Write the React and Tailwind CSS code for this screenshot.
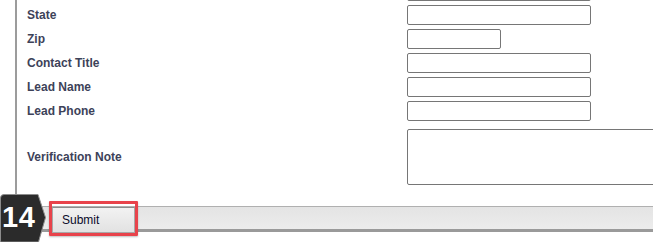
import React from 'react';

// first row is scrolled off the top; only its input's bottom edge shows
const fields = [
  { label: '', size: 'wide' },
  { label: 'State', size: 'wide' },
  { label: 'Zip', size: 'short' },
  { label: 'Contact Title', size: 'wide' },
  { label: 'Lead Name', size: 'wide' },
  { label: 'Lead Phone', size: 'wide' },
];

const StepBadge = ({ step }) => (
  <div className="absolute left-0 top-[194px] w-[47px] h-[48px]">
    <svg width="47" height="48" viewBox="0 0 47 48" className="absolute inset-0">
      <path d="M0.5 4 Q0.5 0.5 4 0.5 L38 0.5 L45.5 23.5 L38.5 48 L0.5 48 Z" fill="#2b2b2b" stroke="#8c8c8c" strokeWidth="1" />
    </svg>
    <span className="absolute left-[2px] top-[7px] text-[29px] leading-[32px] font-bold text-white tracking-[0.5px]">
      {step}
    </span>
  </div>
);

export default function App() {
  return (
    <div className="relative w-[653px] h-[242px] overflow-hidden bg-white font-['Liberation_Sans',Arial,sans-serif]">
      {/* form body */}
      <div className="ml-[15px] mt-[-21px] pb-[15px] border-l-2 border-[#9c9c9c]">
        {fields.map((f, i) => (
          <div key={i} className="grid grid-cols-[380px_1fr] items-center h-[24px] pl-[10px]">
            <label className="text-[12px] font-bold text-[#3d4259]">{f.label}</label>
            <input
              type="text"
              className={`${f.size === 'short' ? 'w-[94px]' : 'w-[184px]'} h-[20px] border border-[#767676] rounded-[2px] bg-white`}
            />
          </div>
        ))}
        <div className="grid grid-cols-[380px_1fr] items-center py-[6px] pl-[10px]">
          <label className="text-[12px] font-bold text-[#3d4259]">Verification Note</label>
          <textarea className="w-[300px] h-[56px] border border-[#767676] rounded-[2px] resize-none" />
        </div>
      </div>

      {/* action bar */}
      <div className="h-[26px] border-t border-[#b0b0b0] border-b-[3px] border-b-[#9a9a9a] bg-gradient-to-b from-[#e4e4e4] to-[#ececec] pl-[52px] flex items-start">
        <div className="relative">
          <button className="mt-[-3px] w-[83px] h-[26px] border border-[#a8a8a8] border-t-[#8c8c8c] bg-gradient-to-b from-[#f2f2f2] to-[#e2e2e2] text-left pl-[9px] text-[12px] text-[#0a0a2a]">
            Submit
          </button>
          {/* highlight box */}
          <div className="absolute left-[-3px] top-[-6px] w-[89px] h-[35px] border-[3px] border-[#e8434b] rounded-[1px] shadow-[0_1px_2px_rgba(0,0,0,0.25)] pointer-events-none" />
        </div>
      </div>

      <StepBadge step="14" />
    </div>
  );
}
